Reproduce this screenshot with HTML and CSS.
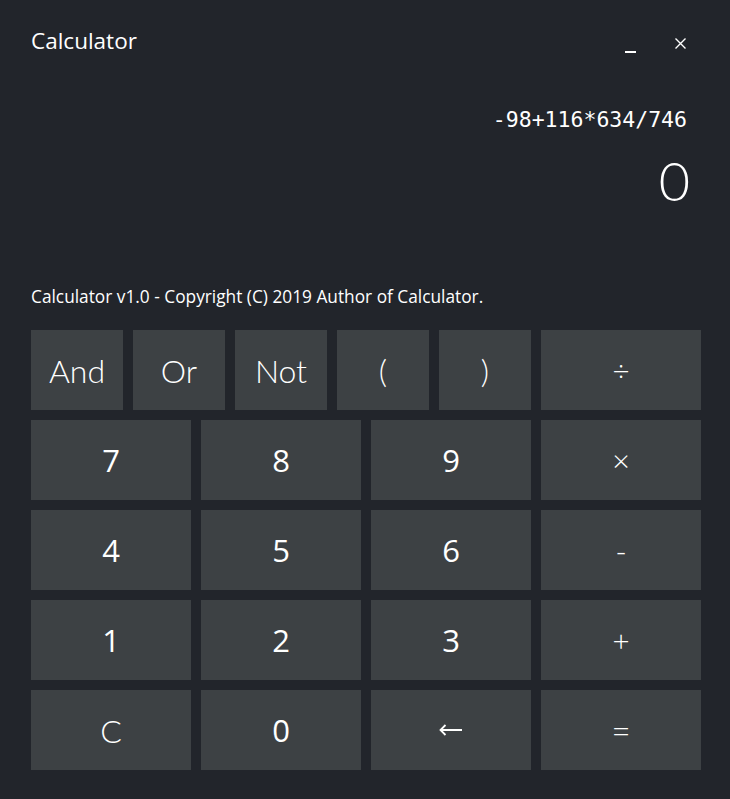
FILE: index.html
```html
<!DOCTYPE html>
<html>
<head>
<meta charset="utf-8">
<link rel="stylesheet" href="styles.css">
</head>
<body>
<div class="window">
  <div class="titlebar">
    <div class="title">Calculator</div>
    <div class="controls">
      <span class="ctl ctl-min"></span>
      <span class="ctl ctl-close">
        <svg width="11" height="11" viewBox="0 0 11 11"><path d="M0.5 0.5 L10.5 10.5 M10.5 0.5 L0.5 10.5" stroke="#fff" stroke-width="1.4" fill="none"/></svg>
      </span>
    </div>
  </div>
  <div class="display">
    <div class="expr">-98+116*634/746</div>
    <div class="result">0</div>
  </div>
  <div class="note">Calculator v1.0 - Copyright (C) 2019 Author of Calculator.</div>
  <div class="keypad">
    <div class="row row-top">
      <div class="key light">And</div>
      <div class="key light">Or</div>
      <div class="key light">Not</div>
      <div class="key light">(</div>
      <div class="key light">)</div>
      <div class="key op">÷</div>
    </div>
    <div class="row">
      <div class="key">7</div>
      <div class="key">8</div>
      <div class="key">9</div>
      <div class="key op">×</div>
    </div>
    <div class="row">
      <div class="key">4</div>
      <div class="key">5</div>
      <div class="key">6</div>
      <div class="key op">-</div>
    </div>
    <div class="row">
      <div class="key">1</div>
      <div class="key">2</div>
      <div class="key">3</div>
      <div class="key op">+</div>
    </div>
    <div class="row">
      <div class="key light">C</div>
      <div class="key">0</div>
      <div class="key arrow">
        <svg width="24" height="12" viewBox="0 0 24 12"><path d="M1.5 6 H23 M6.5 1 L1.5 6 L6.5 11" stroke="#fff" stroke-width="1.8" fill="none"/></svg>
      </div>
      <div class="key op">=</div>
    </div>
  </div>
</div>
</body>
</html>
```

FILE: styles.css
```css
html, body {
  margin: 0;
  padding: 0;
  background: #22252b;
}
body {
  width: 730px;
  height: 799px;
  overflow: hidden;
  font-family: "Open Sans", "Noto Sans", sans-serif;
  color: #ffffff;
}
.window {
  padding: 0 29px 0 31px;
  display: flex;
  flex-direction: column;
}
.titlebar {
  height: 84px;
  display: flex;
  justify-content: space-between;
  align-items: flex-start;
}
.title {
  margin-top: 26px;
  font-size: 22.5px;
  line-height: 30px;
}
.controls {
  display: flex;
  margin-top: 38px;
  margin-right: 15px;
  gap: 39px;
  align-items: flex-start;
}
.ctl {
  display: block;
  width: 11px;
  height: 11px;
  position: relative;
}
.ctl-min::after {
  content: "";
  position: absolute;
  left: 0;
  top: 13px;
  width: 11px;
  height: 1.5px;
  background: #fff;
}
.ctl-close svg { display: block; }
.display {
  display: flex;
  flex-direction: column;
  align-items: flex-end;
  padding-right: 14px;
}
.expr {
  font-family: "DejaVu Sans Mono", "Liberation Mono", monospace;
  font-size: 21.5px;
  line-height: 28px;
  margin-top: 22px;
}
.result {
  font-family: "Lato", "Open Sans", sans-serif;
  font-weight: 300;
  font-size: 54px;
  line-height: 60px;
  margin-top: 17px;
  margin-right: -3px;
}
.note {
  margin-top: 74px;
  font-size: 17.3px;
  line-height: 24px;
  height: 45px;
}
.keypad {
  display: flex;
  flex-direction: column;
  gap: 10px;
}
.row {
  display: grid;
  grid-template-columns: repeat(4, 160px);
  gap: 10px;
}
.row.row-top {
  grid-template-columns: repeat(5, 92px) 160px;
}
.key {
  height: 80px;
  background: #3d4144;
  display: flex;
  align-items: center;
  justify-content: center;
  font-size: 31px;
  font-weight: 400;
}
.key.light {
  font-family: "Lato", "Open Sans", sans-serif;
  font-weight: 300;
  font-size: 32px;
}
.key.op {
  font-size: 30px;
  font-weight: 300;
}
.key svg { display: block; }
```
